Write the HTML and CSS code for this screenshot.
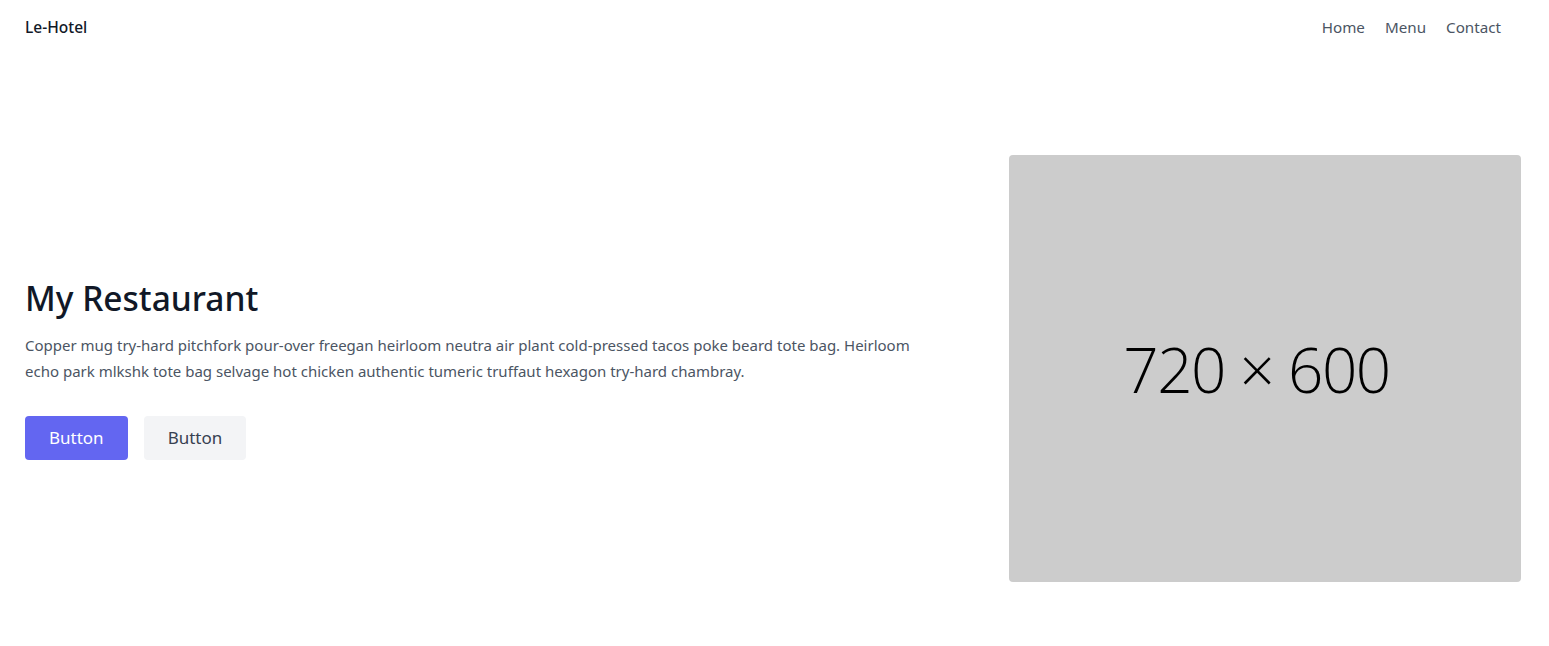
FILE: index.html
```html
<!DOCTYPE html>
<html lang="en">
<head>
<meta charset="utf-8">
<title>Le-Hotel</title>
<link rel="stylesheet" href="styles.css">
</head>
<body>
<header class="header">
  <a class="brand" href="#">Le-Hotel</a>
  <nav class="nav">
    <a href="#">Home</a>
    <a href="#">Menu</a>
    <a href="#">Contact</a>
  </nav>
</header>
<section class="hero">
  <div class="hero-text">
    <h1 class="title">My Restaurant</h1>
    <p class="lead">Copper mug try-hard pitchfork pour-over freegan heirloom neutra air plant cold-pressed tacos poke beard tote bag. Heirloom echo park mlkshk tote bag selvage hot chicken authentic tumeric truffaut hexagon try-hard chambray.</p>
    <div class="actions">
      <button class="btn btn-primary">Button</button>
      <button class="btn btn-secondary">Button</button>
    </div>
  </div>
  <div class="hero-media">
    <div class="placeholder"><span>720 × 600</span></div>
  </div>
</section>
</body>
</html>
```

FILE: styles.css
```css
* { box-sizing: border-box; }
html, body { margin: 0; padding: 0; background: #fff; }
body {
  font-family: "Noto Sans", "DejaVu Sans", sans-serif;
  color: #4b5563;
}
a { text-decoration: none; color: inherit; }

.header {
  display: flex;
  align-items: center;
  justify-content: space-between;
  height: 54px;
  padding: 0 28px 0 25px;
}
.brand {
  color: #111827;
  font-size: 15.5px;
  font-weight: 500;
}
.nav { display: flex; gap: 20px; padding-right: 20px; }
.nav a { color: #4b5563; font-size: 15.2px; }

.hero {
  display: flex;
  align-items: center;
  padding: 101px 28px 64px 25px;
}
.hero-text {
  flex: 1 1 auto;
  padding-right: 96px;
}
.title {
  margin: 0 0 14px;
  font-size: 33.5px;
  font-weight: 500;
  line-height: 40px;
  color: #111827;
}
.lead {
  margin: 0 0 32px;
  font-size: 15px;
  line-height: 26px;
}
.actions { display: flex; gap: 16px; }
.btn {
  font-family: inherit;
  font-size: 17px;
  line-height: 28px;
  padding: 8px 24px;
  border: 0;
  border-radius: 4px;
  cursor: pointer;
}
.btn-primary { background: #6366f1; color: #fff; }
.btn-secondary { background: #f3f4f6; color: #374151; }

.hero-media { flex: 0 0 512px; }
.placeholder {
  width: 512px;
  height: 427px;
  padding-right: 17px;
  background: #cccccc;
  border-radius: 4px;
  display: flex;
  align-items: center;
  justify-content: center;
}
.placeholder span {
  font-family: "Open Sans", sans-serif;
  font-weight: 300;
  font-size: 62px;
  letter-spacing: -1.5px;
  color: #000;
}
```
